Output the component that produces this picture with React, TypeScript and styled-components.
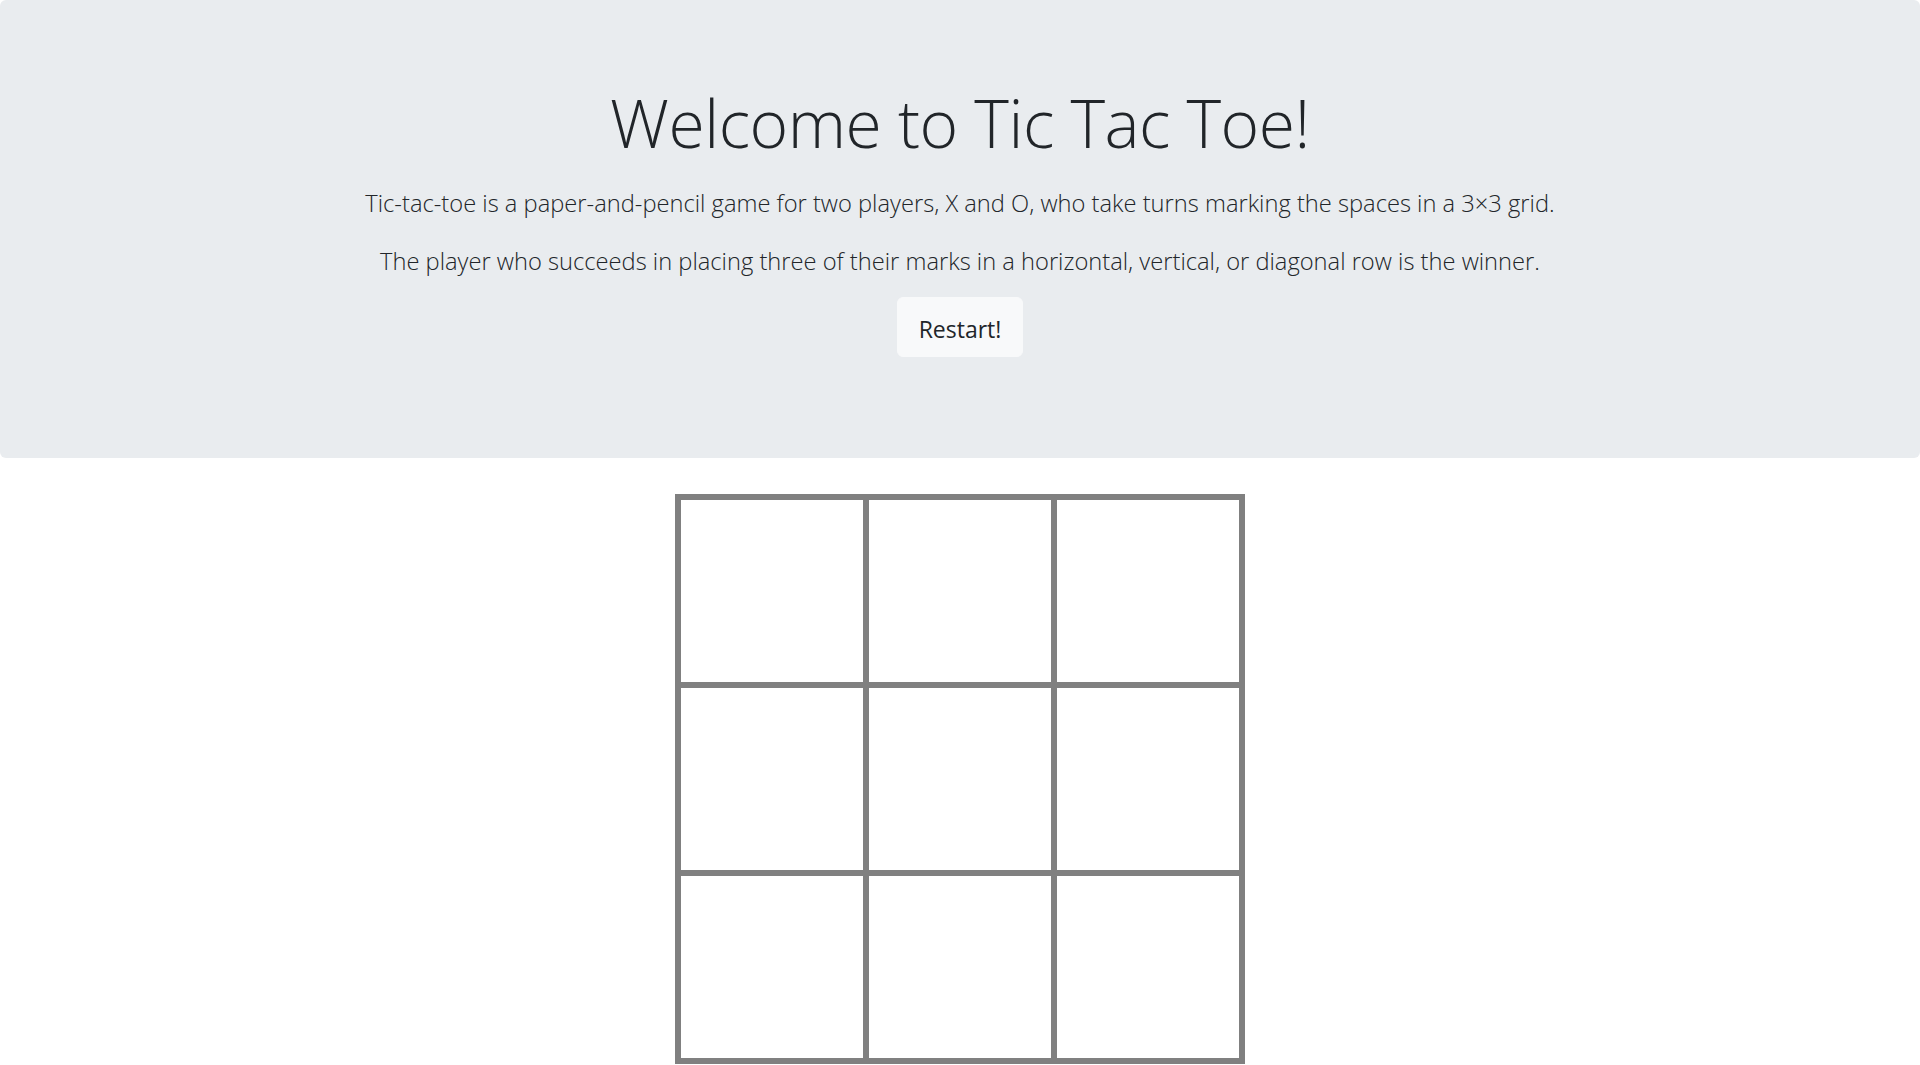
import React from "react";
import styled, { createGlobalStyle } from "styled-components";

const Global = createGlobalStyle`
  html, body { margin: 0; padding: 0; background: #ffffff; }
  body {
    font-family: "Open Sans", "Noto Sans", sans-serif;
    color: #212529;
  }
`;

const Page = styled.div`
  display: flex;
  flex-direction: column;
  align-items: center;
`;

const Jumbotron = styled.header`
  align-self: stretch;
  background: #e9ecef;
  border-radius: 6px;
  padding: 80px 40px 80px;
  margin-bottom: 36px;
  display: flex;
  flex-direction: column;
  align-items: center;
  text-align: center;
`;

const Title = styled.h1`
  margin: 0 0 21px;
  font-size: 66px;
  font-weight: 300;
  line-height: 84px;
  letter-spacing: -0.5px;
  color: #212529;
`;

const Lead = styled.p`
  margin: 0 0 20px;
  font-size: 23.7px;
  font-weight: 300;
  line-height: 37.5px;
  color: #212529;

  &:last-of-type {
    margin-bottom: 17px;
  }
`;

const ButtonRow = styled.div`
  margin-bottom: 21px;
`;

const Button = styled.button`
  font-family: inherit;
  font-size: 23px;
  font-weight: 400;
  line-height: 37.5px;
  padding: 13px 20px 7px;
  height: 60px;
  width: 126px;
  border: 1px solid #f8f9fa;
  background: #f8f9fa;
  color: #212529;
  border-radius: 6px;
  cursor: pointer;
`;

const Board = styled.div`
  display: grid;
  grid-template-columns: repeat(3, 188px);
  grid-template-rows: repeat(3, 188px);
  border: 3px solid #808080;
`;

const Cell = styled.div`
  border: 3px solid #808080;
  background: #ffffff;
`;

export default function App() {
  return (
    <Page>
      <Global />
      <Jumbotron>
        <Title>Welcome to Tic Tac Toe!</Title>
        <Lead>
          Tic-tac-toe is a paper-and-pencil game for two players, X and O, who take turns marking the spaces in a 3×3 grid.
        </Lead>
        <Lead>
          The player who succeeds in placing three of their marks in a horizontal, vertical, or diagonal row is the winner.
        </Lead>
        <ButtonRow>
          <Button>Restart!</Button>
        </ButtonRow>
      </Jumbotron>
      <Board>
        {Array.from({ length: 9 }).map((_, i) => (
          <Cell key={i} />
        ))}
      </Board>
    </Page>
  );
}
